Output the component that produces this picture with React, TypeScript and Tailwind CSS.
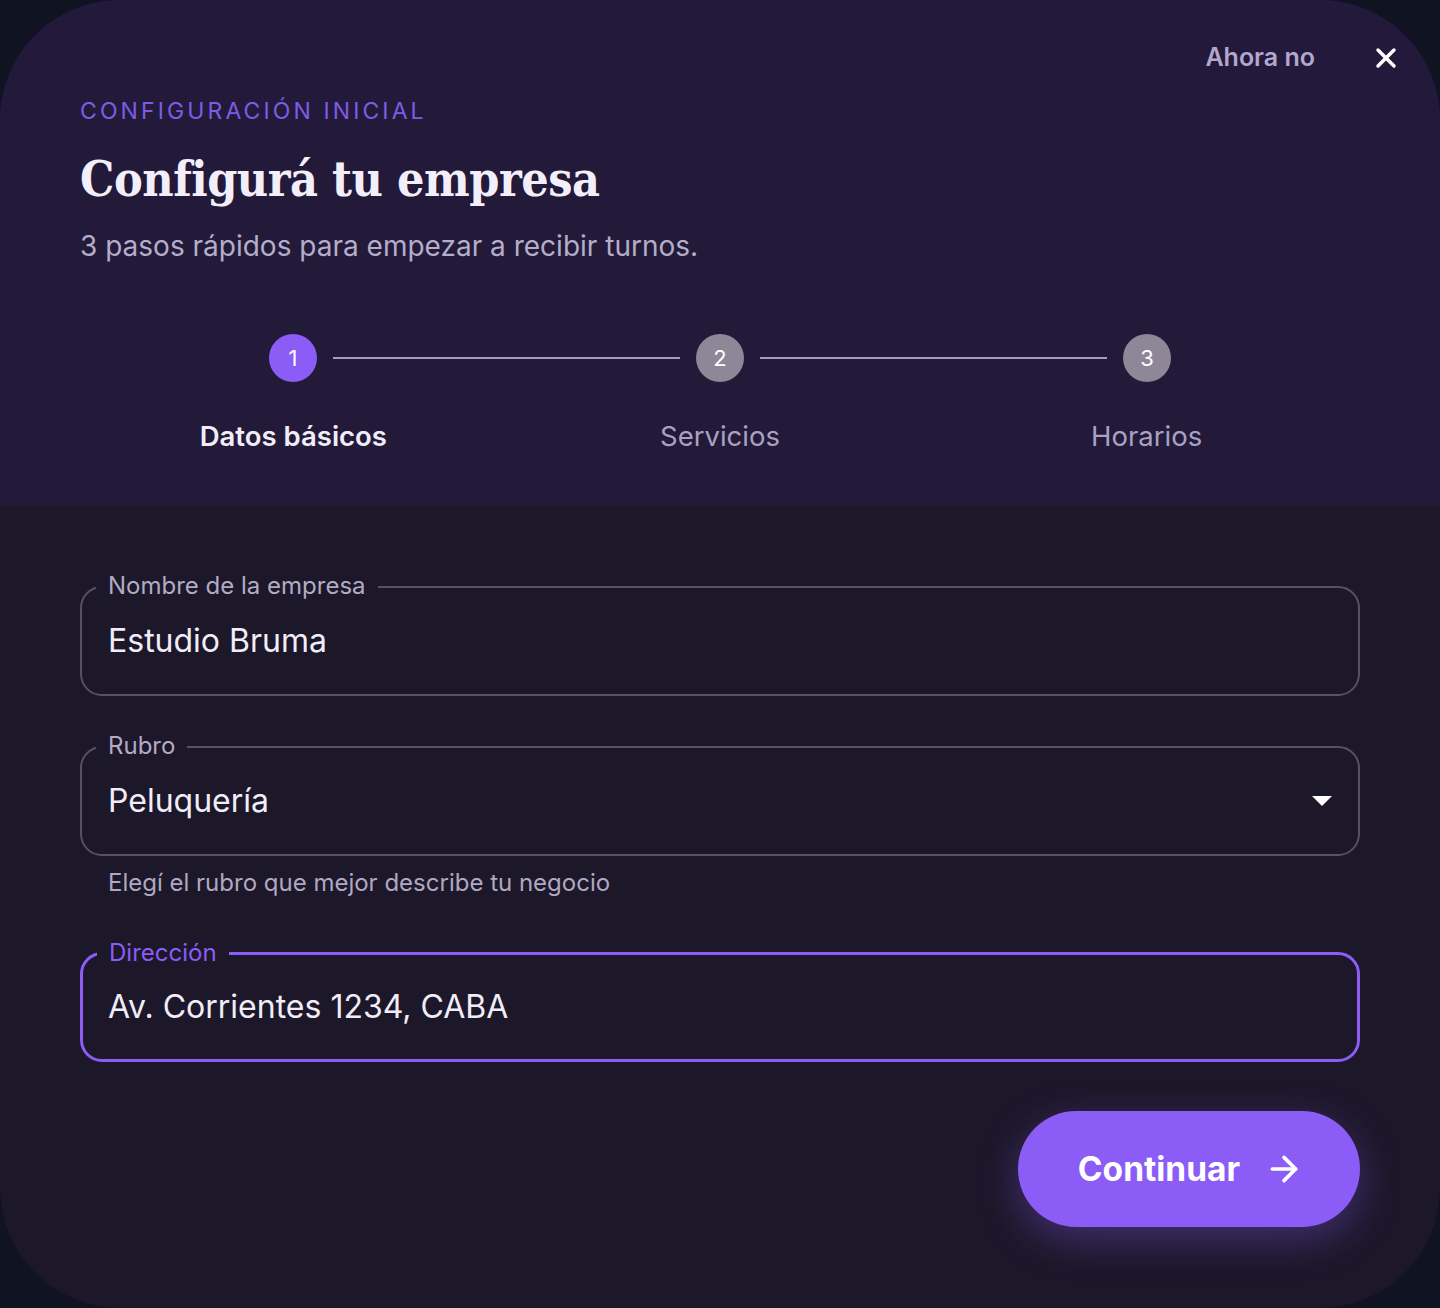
import { X, ArrowRight } from "lucide-react";

const steps = [
  { n: 1, label: "Datos básicos", active: true },
  { n: 2, label: "Servicios", active: false },
  { n: 3, label: "Horarios", active: false },
];

const Field = ({ label, value, focused, select }: { label: string; value: string; focused?: boolean; select?: boolean }) => (
  <div
    className={`relative flex h-[110px] items-center rounded-[22px] ${
      focused ? "border-[3px] border-[#8b5cf6] px-[25px]" : "border-2 border-[#56506a] px-[26px]"
    }`}
  >
    <span
      className={`absolute -top-[16px] left-[14px] bg-[#1c1729] px-3 text-[24px] leading-[28px] ${
        focused ? "text-[#8b5cf6]" : "text-[#b3abc6]"
      }`}
    >
      {label}
    </span>
    <span className="flex-1 text-[32px] text-[#f1edf8]">{value}</span>
    {select && (
      <svg width="20" height="10" viewBox="0 0 20 10">
        <path d="M0 0h20L10 10z" fill="#ffffff" />
      </svg>
    )}
  </div>
);

export default function App() {
  return (
    <div className="min-h-[1308px] w-full bg-[#0f1322]" style={{ fontFamily: "Inter, 'Noto Sans', sans-serif" }}>
      <div className="relative flex min-h-[1308px] flex-col overflow-hidden rounded-[120px] bg-[#1c1729]">
        <div className="relative bg-gradient-to-b from-[#231a3b] to-[#221a38] px-20 pt-[97px] pb-[54px]">
          <div className="absolute right-[38px] top-[39px] flex items-center gap-[55px]">
            <button className="text-[25px] font-semibold text-[#b2a7cd]">Ahora no</button>
            <X size={32} strokeWidth={2.6} className="text-white" />
          </div>

          <p className="text-[23px] leading-[28px] tracking-[0.135em] text-[#7d5ce4]">CONFIGURACIÓN INICIAL</p>
          <h1
            className="mt-[25px] text-[48px] font-bold leading-[58px] tracking-[-0.01em] text-[#f3effa]"
            style={{ fontFamily: "'DejaVu Serif Condensed', 'DejaVu Serif', serif" }}
          >
            Configurá tu empresa
          </h1>
          <p className="mt-[21px] text-[28px] leading-[34px] text-[#b5adc9]">3 pasos rápidos para empezar a recibir turnos.</p>

          <div className="mt-[71px] flex items-center px-[189px]">
            {steps.map((s, i) => (
              <div key={s.n} className={`flex items-center ${i < 2 ? "flex-1" : ""}`}>
                <div
                  className={`flex h-12 w-12 items-center justify-center rounded-full text-[22px] text-white ${
                    s.active ? "bg-[#8b5cf6]" : "bg-[#8d8798]"
                  }`}
                >
                  {s.n}
                </div>
                {i < 2 && <div className="mx-4 h-[2px] flex-1 bg-[#a49cbf]" />}
              </div>
            ))}
          </div>
          <div className="mt-[38px] grid grid-cols-3">
            {steps.map((s) => (
              <div
                key={s.n}
                className={`text-center text-[27.5px] leading-[32px] ${
                  s.active ? "font-semibold text-[#f1edf8]" : "text-[#aaa1c2]"
                }`}
              >
                {s.label}
              </div>
            ))}
          </div>
        </div>

        <div className="flex flex-col px-20 pt-[80px] pb-20">
          <Field label="Nombre de la empresa" value="Estudio Bruma" />
          <div className="mt-[50px]">
            <Field label="Rubro" value="Peluquería" select />
          </div>
          <p className="mt-[12px] px-7 text-[24px] leading-[30px] text-[#b0a8c3]">Elegí el rubro que mejor describe tu negocio</p>
          <div className="mt-[54px]">
            <Field label="Dirección" value="Av. Corrientes 1234, CABA" focused />
          </div>

          <div className="mt-[49px] flex justify-end">
            <button className="flex h-[116px] w-[342px] items-center justify-center gap-[24px] rounded-full bg-[#8b5cf6] pl-[4px] text-[33.5px] font-bold text-white shadow-[0_12px_40px_rgba(139,92,246,0.35)]">
              Continuar
              <ArrowRight size={40} strokeWidth={2.2} />
            </button>
          </div>
        </div>
      </div>
    </div>
  );
}
